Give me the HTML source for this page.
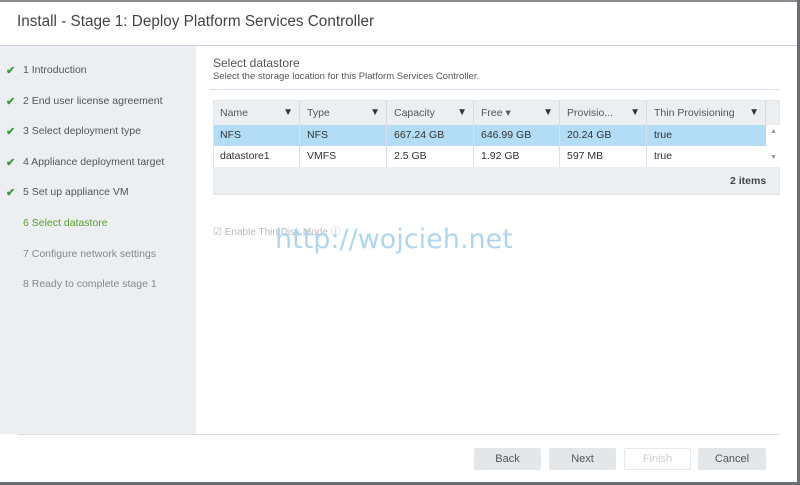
<html><head><style>
body{margin:0;width:800px;height:485px;background:#fff;font-family:"Liberation Sans",sans-serif;position:relative;overflow:hidden}
.a{position:absolute}
.side{left:0;top:46px;width:196px;height:388px;background:#eceff1}
.st{position:absolute;left:23px;font-size:10.5px;color:#555}
.ck{position:absolute;left:6px;color:#3c9a3c;font-size:11px;font-weight:bold}
.th{position:absolute;top:101px;height:24px;line-height:24px;font-size:10.5px;color:#555;border-right:1px solid #d8dde0;box-sizing:border-box;padding-left:7px}
.th i{position:absolute;right:6px;top:0;font-style:normal;font-size:10px;color:#333}
.td{position:absolute;font-size:10.5px;color:#333;padding-left:7px;box-sizing:border-box;border-right:1px solid #dde;height:21px;line-height:21px}
.btn{position:absolute;top:448px;height:22px;line-height:22px;text-align:center;font-size:11px;color:#555;background:#e3e7ea;border-radius:2px}
</style></head><body>
<div class="a" style="left:0;top:0;width:800px;height:2px;background:#8a8e92"></div>
<div class="a" style="right:0;top:0;width:3px;height:485px;background:#6a6e72"></div>
<div class="a" style="left:0;bottom:0;width:800px;height:3px;background:#6a6e72"></div>
<div class="a" style="left:17px;top:13px;font-size:15.3px;color:#444">Install - Stage 1: Deploy Platform Services Controller</div>
<div class="a" style="left:0;top:45px;width:797px;height:1px;background:#ccd"></div>
<div class="a side"></div>
<span class="ck" style="top:64px">✔</span><span class="st" style="top:64px">1 Introduction</span>
<span class="ck" style="top:95px">✔</span><span class="st" style="top:95px">2 End user license agreement</span>
<span class="ck" style="top:125px">✔</span><span class="st" style="top:125px">3 Select deployment type</span>
<span class="ck" style="top:156px">✔</span><span class="st" style="top:156px">4 Appliance deployment target</span>
<span class="ck" style="top:186px">✔</span><span class="st" style="top:186px">5 Set up appliance VM</span>
<span class="st" style="top:217px;color:#5aa02c">6 Select datastore</span>
<span class="st" style="top:248px;color:#888">7 Configure network settings</span>
<span class="st" style="top:278px;color:#888">8 Ready to complete stage 1</span>
<div class="a" style="left:213px;top:56px;font-size:12px;color:#555">Select datastore</div>
<div class="a" style="left:213px;top:71px;font-size:9.5px;color:#555">Select the storage location for this Platform Services Controller.</div>
<div class="a" style="left:210px;top:89px;width:570px;height:1px;background:#dde"></div>
<div class="a" style="left:213px;top:100px;width:567px;height:95px;background:#eceff1;border:1px solid #e2e6e8;box-sizing:border-box"></div>
<div class="th" style="left:213px;width:87px">Name<i>▼</i></div>
<div class="th" style="left:300px;width:87px">Type<i>▼</i></div>
<div class="th" style="left:387px;width:87px">Capacity<i>▼</i></div>
<div class="th" style="left:474px;width:86px">Free ▾<i>▼</i></div>
<div class="th" style="left:560px;width:87px">Provisio...<i>▼</i></div>
<div class="th" style="left:647px;width:119px">Thin Provisioning<i>▼</i></div>
<div class="a" style="left:214px;top:125px;width:552px;height:21px;background:#b3dcf7"></div>
<div class="a" style="left:214px;top:146px;width:552px;height:21px;background:#fff"></div>
<div class="a" style="left:766px;top:125px;width:14px;height:42px;background:#fff"></div>
<div class="a" style="left:770px;top:128px;font-size:7px;color:#999">▲</div>
<div class="a" style="left:770px;top:154px;font-size:7px;color:#999">▼</div>
<div class="td" style="left:213px;top:125px;width:87px">NFS</div><div class="td" style="left:300px;top:125px;width:87px">NFS</div><div class="td" style="left:387px;top:125px;width:87px">667.24 GB</div><div class="td" style="left:474px;top:125px;width:86px">646.99 GB</div><div class="td" style="left:560px;top:125px;width:87px">20.24 GB</div><div class="td" style="left:647px;top:125px;width:119px;border:0">true</div>
<div class="td" style="left:213px;top:146px;width:87px">datastore1</div><div class="td" style="left:300px;top:146px;width:87px">VMFS</div><div class="td" style="left:387px;top:146px;width:87px">2.5 GB</div><div class="td" style="left:474px;top:146px;width:86px">1.92 GB</div><div class="td" style="left:560px;top:146px;width:87px">597 MB</div><div class="td" style="left:647px;top:146px;width:119px;border:0">true</div>
<div class="a" style="left:730px;top:175px;font-size:10.5px;font-weight:bold;color:#444">2 items</div>
<div class="a" style="left:213px;top:223px;font-size:10px;color:#bbb">☑ Enable Thin Disk Mode ⓘ</div>
<div class="a" style="left:275px;top:224px;font-size:27px;color:#a6d2ee;font-family:'DejaVu Sans',sans-serif;opacity:.9">http://wojcieh.net</div>
<div class="a" style="left:17px;top:434px;width:763px;height:1px;background:#ddd"></div>
<div class="btn" style="left:474px;width:67px">Back</div>
<div class="btn" style="left:549px;width:67px">Next</div>
<div class="btn" style="left:624px;width:65px;background:#fff;border:1px solid #e6e9eb;color:#ccc;height:20px;line-height:20px">Finish</div>
<div class="btn" style="left:698px;width:68px">Cancel</div>
</body></html>
